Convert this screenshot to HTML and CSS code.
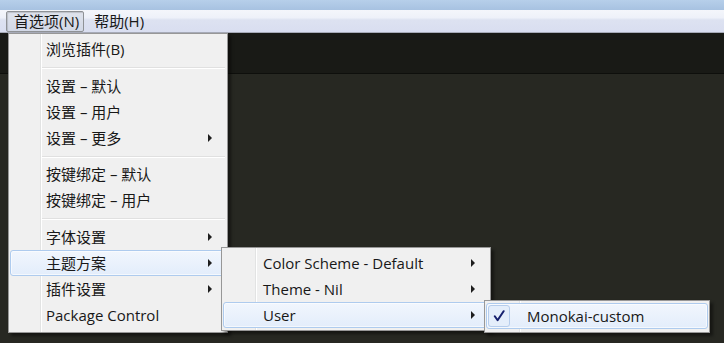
FILE: index.html
```html
<!DOCTYPE html>
<html lang="zh-CN">
<head>
    <meta charset="UTF-8">
    <title>首选项</title>
    <link rel="stylesheet" href="styles.css">
</head>
<body>
    <div class="window">
        <div class="titlebar"></div>
        <div class="menubar">
            <span class="menubar-item pressed">首选项(N)</span>
            <span class="menubar-item">帮助(H)</span>
        </div>
        <div class="tabbar"></div>
        <div class="editor"></div>
    </div>

    <!-- Preferences menu -->
    <div class="menu menu-main">
        <div class="menu-item">浏览插件(B)</div>
        <div class="menu-sep"></div>
        <div class="menu-item">设置 – 默认</div>
        <div class="menu-item">设置 – 用户</div>
        <div class="menu-item has-sub">设置 – 更多</div>
        <div class="menu-sep short"></div>
        <div class="menu-item">按键绑定 – 默认</div>
        <div class="menu-item">按键绑定 – 用户</div>
        <div class="menu-sep"></div>
        <div class="menu-item has-sub">字体设置</div>
        <div class="menu-item has-sub active">主题方案</div>
        <div class="menu-item has-sub">插件设置</div>
        <div class="menu-item">Package Control</div>
    </div>

    <!-- Theme submenu -->
    <div class="menu menu-theme">
        <div class="menu-item has-sub">Color Scheme - Default</div>
        <div class="menu-item has-sub">Theme - Nil</div>
        <div class="menu-item has-sub active">User</div>
    </div>

    <!-- User submenu -->
    <div class="menu menu-user">
        <div class="menu-item active checked">
            <span class="check">
                <svg width="12" height="12" viewBox="0 0 12 12">
                    <path d="M1.8 6.2 L4.6 10.2 L10.6 1.2" fill="none" stroke="#16206e" stroke-width="2" stroke-linejoin="round" stroke-linecap="round"/>
                </svg>
            </span>
            Monokai-custom
        </div>
    </div>
</body>
</html>
```

FILE: styles.css
```css
body {
    margin: 0;
    width: 724px;
    height: 343px;
    overflow: hidden;
    background: #272822;
    font-family: "Open Sans", "Noto Sans CJK SC", sans-serif;
    font-size: 15px;
    color: #181818;
}
.window {
    display: flex;
    flex-direction: column;
    height: 343px;
}
.titlebar {
    height: 10px;
    background: linear-gradient(#b6cfea, #a7c2e1);
}
.menubar {
    height: 22px;
    display: flex;
    align-items: center;
    gap: 2px;
    padding-left: 6px;
    background: linear-gradient(#f4f6fb 0%, #eef1f9 35%, #dde2f1 45%, #d9def0 100%);
    border-bottom: 1px solid #a7abb8;
}
.menubar-item {
    padding: 0 4px 0 7px;
    line-height: 19px;
    border: 1px solid transparent;
    border-radius: 2px;
}
.menubar-item.pressed {
    border-color: #8f9296;
    background: linear-gradient(#dfe3ec, #d2d8e6);
    box-shadow: inset 1px 1px 1px rgba(0, 0, 0, 0.15);
}
.tabbar {
    height: 40px;
    background: #191a16;
    border-bottom: 1px solid #0e0f0c;
}
.editor {
    flex: 1;
    background: #272822;
}

/* Menus */
.menu {
    position: absolute;
    box-sizing: border-box;
    background-color: #f0f0f0;
    border: 1px solid #979797;
    padding: 2px 1px;
    box-shadow: 3px 3px 3px rgba(0, 0, 0, 0.45);
}
.menu-main {
    left: 8px;
    top: 33px;
    width: 220px;
    height: 300px;
    background-image: linear-gradient(to right, transparent 31px, #e2e3e3 31px, #e2e3e3 32px, #ffffff 32px, #ffffff 33px, transparent 33px);
}
.menu-theme {
    left: 221px;
    top: 247px;
    width: 270px;
    height: 84px;
    background-image: linear-gradient(to right, transparent 33px, #e2e3e3 33px, #e2e3e3 34px, #ffffff 34px, #ffffff 35px, transparent 35px);
}
.menu-user {
    left: 484px;
    top: 300px;
    width: 226px;
    height: 33px;
    background-image: linear-gradient(to right, transparent 34px, #e2e3e3 34px, #e2e3e3 35px, #ffffff 35px, #ffffff 36px, transparent 36px);
}
.menu-item {
    position: relative;
    box-sizing: border-box;
    height: 26px;
    line-height: 24px;
    padding-left: 35px;
    border: 1px solid transparent;
    border-radius: 3px;
    white-space: nowrap;
}
.menu-theme .menu-item {
    padding-left: 39px;
}
.menu-user .menu-item {
    padding-left: 40px;
}
.menu-item.has-sub::after {
    content: "";
    position: absolute;
    right: 13px;
    top: 8px;
    border-left: 4px solid #1e1e1e;
    border-top: 4px solid transparent;
    border-bottom: 4px solid transparent;
}
.menu-item.active {
    border-color: #aecbee;
    background: linear-gradient(#f1f6fd, #e3edfb);
    box-shadow: inset 0 0 0 1px rgba(255, 255, 255, 0.6);
}
.check {
    position: absolute;
    left: 1px;
    top: 1px;
    width: 22px;
    height: 22px;
    box-sizing: border-box;
    border: 1px solid #b6cdec;
    border-radius: 3px;
    background: #e4eefb;
    display: flex;
    align-items: center;
    justify-content: center;
}
.menu-sep {
    height: 11px;
    margin-left: 32px;
    margin-right: 1px;
    background: linear-gradient(transparent 5px, #e0e0e0 5px, #e0e0e0 6px, #ffffff 6px, #ffffff 7px, transparent 7px);
}
.menu-sep.short {
    height: 10px;
}
```
